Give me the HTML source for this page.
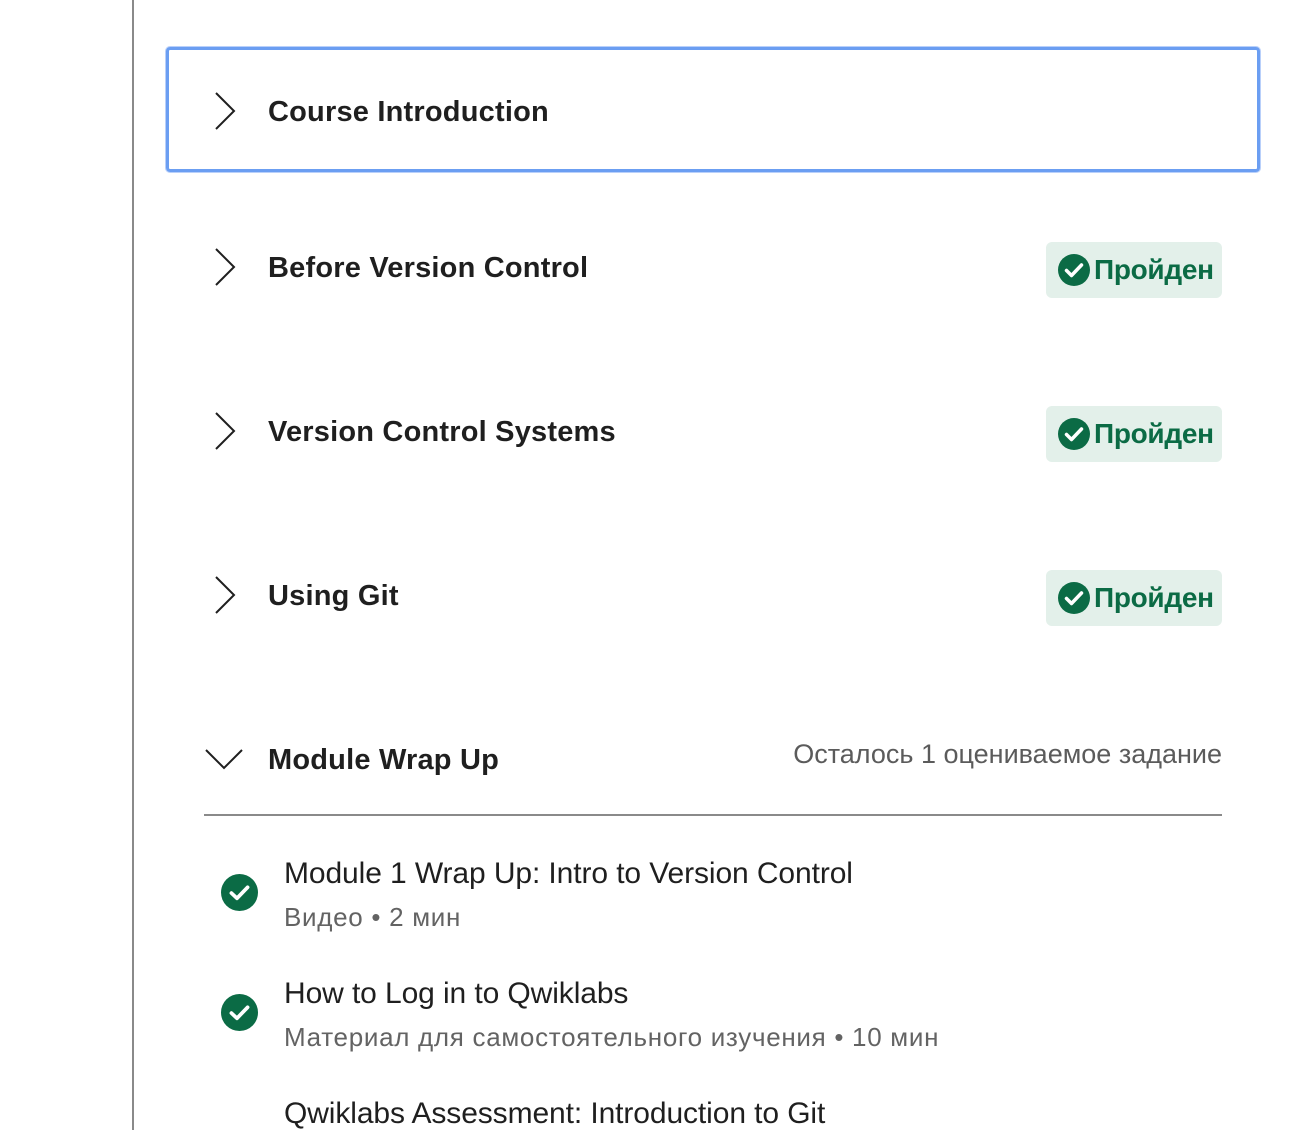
<!DOCTYPE html>
<html><head><meta charset="utf-8"><style>
html,body{margin:0;padding:0;background:#fff;width:1292px;height:1130px;overflow:hidden;position:relative;font-family:"Liberation Sans",sans-serif;}
.vl{position:absolute;left:132px;top:0;width:2px;height:1130px;background:#8a8a8a;}
.focus{position:absolute;left:166px;top:47px;width:1088px;height:119px;border:3px solid #6b9ef2;border-radius:4px;box-shadow:0 0 0 1px #b9d0fa;}
.t{position:absolute;left:268px;font-weight:bold;font-size:29px;color:#1f1f1f;letter-spacing:0.2px;line-height:1;}
.chev{position:absolute;left:212px;width:26px;height:40px;}
.badge{position:absolute;left:1046px;width:176px;height:56px;background:#e3f0ea;border-radius:6px;}
.badge svg{position:absolute;left:12px;top:12px;}
.badge span{position:absolute;left:48px;top:14px;font-weight:bold;font-size:28px;color:#0b6b45;line-height:1;letter-spacing:-0.3px;}
.rem{position:absolute;right:70px;top:741px;font-size:27px;color:#5b5b5b;line-height:1;}
.div{position:absolute;left:204px;top:814px;width:1018px;height:2px;background:#8a8a8a;}
.it{position:absolute;left:284px;font-size:30px;color:#1f1f1f;line-height:1;letter-spacing:-0.1px;}
.sub{position:absolute;left:284px;font-size:26px;color:#636363;line-height:1;letter-spacing:0.7px;}
.ck{position:absolute;left:221px;}
</style></head><body>
<div class="vl"></div>
<div class="focus"></div>

<svg class="chev" style="top:91px" viewBox="0 0 26 40"><path d="M4 2 L22 20 L4 38" fill="none" stroke="#1f1f1f" stroke-width="2"/></svg>
<div class="t" style="top:98px">Course Introduction</div>

<svg class="chev" style="top:247px" viewBox="0 0 26 40"><path d="M4 2 L22 20 L4 38" fill="none" stroke="#1f1f1f" stroke-width="2"/></svg>
<div class="t" style="top:254px">Before Version Control</div>
<div class="badge" style="top:242px"><svg width="32" height="32" viewBox="0 0 32 32"><circle cx="16" cy="16" r="16" fill="#0b6b45"/><path d="M8.5 16.5 L13.5 21.5 L23.5 11" fill="none" stroke="#fff" stroke-width="3.5" stroke-linecap="round" stroke-linejoin="round"/></svg><span>Пройден</span></div>

<svg class="chev" style="top:411px" viewBox="0 0 26 40"><path d="M4 2 L22 20 L4 38" fill="none" stroke="#1f1f1f" stroke-width="2"/></svg>
<div class="t" style="top:418px">Version Control Systems</div>
<div class="badge" style="top:406px"><svg width="32" height="32" viewBox="0 0 32 32"><circle cx="16" cy="16" r="16" fill="#0b6b45"/><path d="M8.5 16.5 L13.5 21.5 L23.5 11" fill="none" stroke="#fff" stroke-width="3.5" stroke-linecap="round" stroke-linejoin="round"/></svg><span>Пройден</span></div>

<svg class="chev" style="top:575px" viewBox="0 0 26 40"><path d="M4 2 L22 20 L4 38" fill="none" stroke="#1f1f1f" stroke-width="2"/></svg>
<div class="t" style="top:582px">Using Git</div>
<div class="badge" style="top:570px"><svg width="32" height="32" viewBox="0 0 32 32"><circle cx="16" cy="16" r="16" fill="#0b6b45"/><path d="M8.5 16.5 L13.5 21.5 L23.5 11" fill="none" stroke="#fff" stroke-width="3.5" stroke-linecap="round" stroke-linejoin="round"/></svg><span>Пройден</span></div>

<svg style="position:absolute;left:204px;top:747px" width="40" height="24" viewBox="0 0 40 24"><path d="M2 3 L20 21 L38 3" fill="none" stroke="#1f1f1f" stroke-width="2"/></svg>
<div class="t" style="top:746px">Module Wrap Up</div>
<div class="rem">Осталось 1 оцениваемое задание</div>
<div class="div"></div>

<svg class="ck" style="top:874px" width="37" height="37" viewBox="0 0 32 32"><circle cx="16" cy="16" r="16" fill="#0b6b45"/><path d="M9 16.5 L13.8 21 L23 11.5" fill="none" stroke="#fff" stroke-width="3.2" stroke-linecap="round" stroke-linejoin="round"/></svg>
<div class="it" style="top:859px">Module 1 Wrap Up: Intro to Version Control</div>
<div class="sub" style="top:904px">Видео • 2 мин</div>

<svg class="ck" style="top:994px" width="37" height="37" viewBox="0 0 32 32"><circle cx="16" cy="16" r="16" fill="#0b6b45"/><path d="M9 16.5 L13.8 21 L23 11.5" fill="none" stroke="#fff" stroke-width="3.2" stroke-linecap="round" stroke-linejoin="round"/></svg>
<div class="it" style="top:979px">How to Log in to Qwiklabs</div>
<div class="sub" style="top:1024px">Материал для самостоятельного изучения • 10 мин</div>

<div class="it" style="top:1099px">Qwiklabs Assessment: Introduction to Git</div>
</body></html>
